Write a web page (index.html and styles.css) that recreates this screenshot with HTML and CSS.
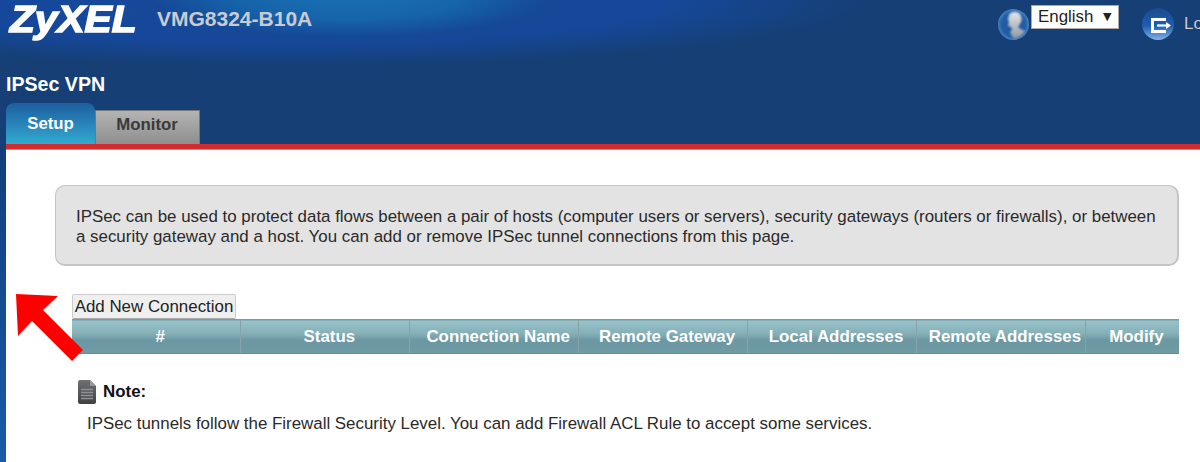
FILE: index.html
```html
<!DOCTYPE html>
<html lang="en">
<head>
  <meta charset="UTF-8" />
  <title>IPSec VPN</title>
  <link rel="stylesheet" href="styles.css">
</head>
<body>

<!-- Header -->
<div class="header">
  <div class="topbar">
    <span class="logo">ZyXEL</span>
    <span class="model">VMG8324-B10A</span>
    <div class="userbox">
      <svg class="round-icon user-icon" viewBox="0 0 33 31">
        <defs>
          <radialGradient id="userBall" cx="50%" cy="50%" r="52%">
            <stop offset="0" stop-color="#1b5198"/>
            <stop offset="0.75" stop-color="#215fa8"/>
            <stop offset="1" stop-color="#5086bf"/>
          </radialGradient>
          <linearGradient id="skin" x1="0" y1="0" x2="0" y2="1">
            <stop offset="0" stop-color="#e4e7ea"/>
            <stop offset="1" stop-color="#8f99a6"/>
          </linearGradient>
          <linearGradient id="logoutBall" x1="0" y1="0" x2="0" y2="1">
            <stop offset="0" stop-color="#1a4a8e"/>
            <stop offset="0.55" stop-color="#1f5cb0"/>
            <stop offset="1" stop-color="#7fb2e6"/>
          </linearGradient>
          <linearGradient id="docFill" x1="0" y1="0" x2="0" y2="1">
            <stop offset="0" stop-color="#6e7072"/>
            <stop offset="1" stop-color="#3f4143"/>
          </linearGradient>
          <filter id="soft"><feGaussianBlur stdDeviation="1"/></filter>
        </defs>
        <circle cx="16.500" cy="15.500" r="15.500" fill="url(#userBall)"/>
        <path d="M12 6c2-4 8-4 11-1 2 3 2 7 0 10l-2 3c2 2 5 3 7 4-3 5-8 8-12 7l-3-6 2-2-1-3-3-1 1-4-1-2z" fill="url(#skin)" filter="url(#soft)"/>
      </svg>
      <div class="lang">English <span class="caret">▼</span></div>
      <svg class="round-icon logout-icon" viewBox="0 0 32 32">
        <circle cx="16" cy="16" r="16" fill="url(#logoutBall)"/>
        <path d="M24 11.500H10.500V23.500H24" fill="none" stroke="#fff" stroke-width="3"/>
        <path d="M15 17.500h10" stroke="#fff" stroke-width="2.200"/>
        <polygon points="24,14 29,17.500 24,21" fill="#fff"/>
      </svg>
      <span class="logout">Logout</span>
    </div>
  </div>
  <h1 class="page-title">IPSec VPN</h1>
  <div class="tabs">
    <div class="tab active">Setup</div>
    <div class="tab">Monitor</div>
  </div>
  <div class="redbar"></div>
</div>

<!-- Content -->
<div class="content">
  <div class="info-box">
    IPSec can be used to protect data flows between a pair of hosts (computer users or servers), security gateways (routers or firewalls), or between a security gateway and a host. You can add or remove IPSec tunnel connections from this page.
  </div>

  <button class="add-btn">Add New Connection</button>
  <table class="conn-table">
    <thead>
      <tr>
        <th class="col-wide">#</th>
        <th class="col-wide">Status</th>
        <th class="col-wide">Connection Name</th>
        <th class="col-wide">Remote Gateway</th>
        <th class="col-wide">Local Addresses</th>
        <th class="col-wide">Remote Addresses</th>
        <th>Modify</th>
      </tr>
    </thead>
  </table>

  <div class="note-head">
    <svg class="note-icon" viewBox="0 0 18 24">
      <path d="M0 2q0-2 2-2h10l6 6v16q0 2-2 2H2q-2 0-2-2z" fill="url(#docFill)"/>
      <path d="M12 0l6 6h-6z" fill="#97999b"/>
      <path d="M3 9.500h12M3 12.500h12M3 15.500h12M3 18.500h12" stroke="#8f9294" stroke-width="1.500"/>
    </svg>
    <b>Note:</b>
  </div>
  <p class="note-text">IPSec tunnels follow the Firewall Security Level. You can add Firewall ACL Rule to accept some services.</p>
</div>

<!-- Red arrow drawn over the page -->
<svg class="arrow" viewBox="0 0 70 70">
  <polygon points="0,0 42,2 27,16 67,56 56,67 16,27 2,42" fill="#ff0000"/>
</svg>

</body>
</html>
```

FILE: styles.css
```css
* { margin: 0; padding: 0; box-sizing: border-box; }
html, body { height: 100%; }
body {
  font-family: "Liberation Sans", Arial, sans-serif;
  color: #222;
  background: #fff;
  overflow: hidden;
  position: relative;
}
.header {
  height: 150px;
  padding-left: 6px;
  background:
    radial-gradient(ellipse 250px 52px at 350px -4px, #1a70b4 0%, #1664aa 45%, rgba(21,72,150,0.8) 80%, rgba(21,63,117,0) 100%),
    radial-gradient(ellipse 580px 66px at 290px 0, #15499a 0%, #15489a 65%, rgba(21,63,117,0) 100%),
    #153f75;
}
.topbar {
  display: flex;
  align-items: flex-start;
  height: 62px;
}
.logo {
  display: inline-block;
  flex: none;
  width: 147px;
  margin-left: 4px;
  font-size: 36px;
  font-weight: bold;
  font-style: italic;
  line-height: 40px;
  color: #fff;
  -webkit-text-stroke: 1.5px #fff;
  transform: scaleX(1.13);
  transform-origin: left center;
}
.model {
  font-size: 21px;
  font-weight: bold;
  line-height: 22px;
  color: #c8ccd2;
  margin: 8px 0 0 0;
}
.userbox {
  display: flex;
  align-items: flex-start;
  margin-left: auto;
  width: 204px;
  flex: none;
  overflow: hidden;
}
.round-icon {
  flex: none;
  margin-top: 9px;
}
.user-icon { width: 33px; height: 31px; margin-left: 1px; }
.lang {
  flex: none;
  width: 88px;
  height: 24px;
  margin: 5px 0 0 1px;
  padding-left: 6px;
  background: #fff;
  border: 1px solid #aaa;
  font-size: 16.900px;
  line-height: 22px;
  color: #222;
  white-space: nowrap;
}
.caret { font-family: "DejaVu Sans", sans-serif; font-size: 11px; margin-left: 5px; vertical-align: 2px; }
.logout-icon { width: 32px; height: 32px; margin: 8px 0 0 23px; }
.logout {
  font-size: 16.900px;
  line-height: 20px;
  color: #c8ccd2;
  margin: 14px 0 0 10px;
}
.page-title {
  font-size: 19.600px;
  line-height: 22px;
  color: #fff;
  margin-top: 11px;
}
.tabs {
  display: flex;
  align-items: flex-end;
  height: 41px;
  margin-top: 8px;
}
.tab {
  width: 105px;
  height: 34px;
  border: 1px solid #777;
  border-bottom: 0;
  background: linear-gradient(#b4b4b4, #8e8e8e);
  color: #3a3a3a;
  font-size: 16.800px;
  font-weight: bold;
  line-height: 28px;
  text-align: center;
  padding-right: 1px;
}
.tab.active {
  width: 89px;
  height: 41px;
  border: 0;
  border-radius: 8px 8px 0 0;
  background: linear-gradient(#1c5f9d, #2a86bd 55%, #2eaccd);
  color: #fff;
  line-height: 42px;
  padding-right: 0;
}
.redbar {
  height: 6px;
  background: linear-gradient(#d12d31 83%, #e87a7a 83%);
}
.content {
  height: calc(100% - 150px);
  padding: 35px 21px 0 55px;
  background: linear-gradient(#123f7a, #1a5aa8) no-repeat left top / 6px 100%;
}
.info-box {
  height: 81px;
  padding: 21px 20px 0 20px;
  background: #e3e3e3;
  border: 2px solid #c4c4c4;
  border-top-width: 1px;
  border-left-width: 1px;
  border-radius: 10px;
  font-size: 16.900px;
  line-height: 20px;
  color: #2a2a2a;
}
.add-btn {
  display: block;
  height: 25px;
  width: 164px;
  margin: 28px 0 0 17px;
  background: #efefef;
  border: 1px solid #ccc;
  border-bottom: 1px solid #aaa;
  border-radius: 2px;
  font-family: inherit;
  font-size: 16.900px;
  line-height: 22px;
  color: #222;
  text-align: center;
  padding: 0;
}
.conn-table {
  width: 1107px;
  margin-left: 17px;
  border-collapse: collapse;
  table-layout: fixed;
}
.conn-table th {
  height: 34px;
  padding: 0 0 0 8px;
  border-top: 1px solid #7c9aa2;
  border-bottom: 1px solid #6b8a92;
  border-left: 1px solid #86a3aa;
  background: linear-gradient(#98c3cb, #86b0b8 40%, #6b97a2 60%, #6f9ba5);
  color: #fff;
  font-size: 16.900px;
  font-weight: bold;
  white-space: nowrap;
}
.conn-table th:first-child { border-left: 0; }
.conn-table .col-wide { width: 168.900px; }
.note-head {
  display: flex;
  align-items: center;
  gap: 7px;
  margin: 26px 0 0 23px;
  font-size: 16.900px;
  color: #111;
}
.note-icon { width: 18px; height: 24px; }
.note-text {
  font-size: 16.900px;
  line-height: 20px;
  color: #2a2a2a;
  margin: 10px 0 0 32px;
  white-space: nowrap;
}
.arrow {
  position: absolute;
  left: 16px;
  top: 294px;
  width: 70px;
  height: 70px;
}
```
